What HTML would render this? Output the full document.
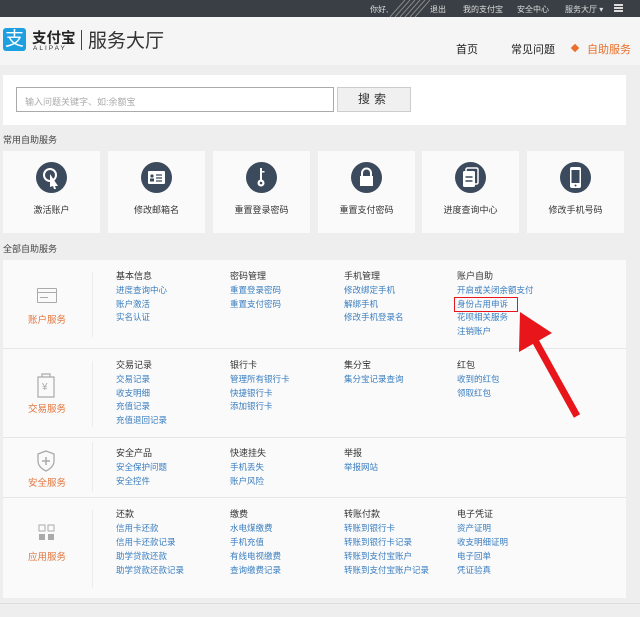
<!DOCTYPE html>
<html><head><meta charset="utf-8"><style>
*{margin:0;padding:0;box-sizing:border-box}
body{width:640px;height:617px;overflow:hidden;background:#eeeeee;font-family:"Liberation Sans","Noto Sans CJK SC",sans-serif;position:relative;font-size:9px}
.abs{position:absolute;white-space:nowrap}
.top{position:absolute;left:0;top:0;width:640px;height:17px;background:#393f45;color:#ddd;font-size:8px}
.top span{position:absolute;top:4px}
.hdr{position:absolute;left:0;top:17px;width:640px;height:48px;background:#f5f5f5}
.panel{position:absolute;background:#fafafa}
.card{position:absolute;top:151px;width:97px;height:82px;background:#fafafa}
.card svg{position:absolute;left:33px;top:11px}
.card div{position:absolute;top:52px;width:100%;text-align:center;font-size:9px;color:#333}
.h{color:#333;font-size:9px}
.l{color:#3a7ec0;font-size:8.5px}
.sec{color:#e0773f;font-size:9.5px}
.sep{position:absolute;left:92px;width:1px;background:#ececec}
.rowline{position:absolute;left:3px;width:623px;height:1px;background:#e6e6e6}
</style></head><body>
<div class="top">
<span style="left:370px">你好,</span>
<svg class="abs" style="left:380px;top:0" width="60" height="17"><g stroke="#888" stroke-width="1"><path d="M10 17L25 0M15 17L30 0M20 17L35 0M25 17L40 0M30 17L45 0M35 17L50 0"/></g></svg>
<span style="left:430px">退出</span>
<span style="left:463px">我的支付宝</span>
<span style="left:517px">安全中心</span>
<span style="left:565px">服务大厅 ▾</span>
<span style="left:614px;top:4px;width:9px;height:8px;border-top:2px solid #ddd;border-bottom:2px solid #ddd"></span>
<span style="left:614px;top:7px;width:9px;height:2px;background:#ddd"></span>
</div>
<div class="hdr">
<div class="abs" style="left:3px;top:11px;width:23px;height:23px;background:#1e9fe0;border-radius:3px;color:#fff;font-size:19px;line-height:23px;text-align:center">支</div>
<div class="abs" style="left:32px;top:10px;font-size:14.5px;font-weight:bold;color:#222">支付宝</div>
<div class="abs" style="left:33px;top:28px;font-size:6.5px;letter-spacing:2px;color:#333">ALIPAY</div>
<div class="abs" style="left:81px;top:13px;width:1px;height:20px;background:#444"></div>
<div class="abs" style="left:88px;top:9px;font-size:19px;color:#333">服务大厅</div>
<div class="abs" style="left:456px;top:24px;font-size:11px;color:#222">首页</div>
<div class="abs" style="left:511px;top:24px;font-size:11px;color:#222">常见问题</div>
<div class="abs" style="left:572px;top:28px;width:6px;height:6px;background:#e8702a;transform:rotate(45deg)"></div>
<div class="abs" style="left:587px;top:24px;font-size:11px;color:#e8702a">自助服务</div>
</div>
<div class="panel" style="left:3px;top:75px;width:623px;height:50px;background:#fff"></div>
<div class="abs" style="left:16px;top:87px;width:318px;height:25px;border:1px solid #aaa;background:#fff;color:#aaa;font-size:9px;padding:7px 0 0 8px">输入问题关键字、如:余额宝</div>
<div class="abs" style="left:337px;top:87px;width:74px;height:25px;border:1px solid #ccc;background:#f0f0f0;color:#333;font-size:12px;text-align:center;line-height:23px;letter-spacing:4px">搜索</div>
<div class="abs" style="left:3px;top:133px;color:#444">常用自助服务</div>
<div class="card" style="left:3px"><svg width="31" height="31"><circle cx="15.5" cy="15.5" r="15.5" fill="#3b4a5c"/><circle cx="14" cy="13" r="6" fill="none" stroke="#fff" stroke-width="2"/><path d="M14 12L22 24L19 24L20 27L18 27L17 24L14 25Z" fill="#fff"/></svg><div>激活账户</div></div>
<div class="card" style="left:108px"><svg width="31" height="31"><circle cx="15.5" cy="15.5" r="15.5" fill="#3b4a5c"/><rect x="7" y="9" width="17" height="13" rx="1" fill="#fff"/><circle cx="11" cy="14" r="1.6" fill="#3b4a5c"/><rect x="9" y="16.5" width="4" height="3" fill="#3b4a5c"/><path d="M15 13h6M15 16h6M15 19h6" stroke="#3b4a5c" stroke-width="1.2"/></svg><div>修改邮箱名</div></div>
<div class="card" style="left:213px"><svg width="31" height="31"><circle cx="15.5" cy="15.5" r="15.5" fill="#3b4a5c"/><circle cx="15" cy="21" r="3.5" fill="#fff"/><rect x="14" y="6" width="2" height="13" fill="#fff"/><rect x="16" y="9" width="2.5" height="1.5" fill="#fff"/><circle cx="15" cy="21" r="1.3" fill="#3b4a5c"/></svg><div>重置登录密码</div></div>
<div class="card" style="left:318px"><svg width="31" height="31"><circle cx="15.5" cy="15.5" r="15.5" fill="#3b4a5c"/><path d="M11 14v-3a4.5 4.5 0 0 1 9 0v3" fill="none" stroke="#fff" stroke-width="2"/><rect x="9" y="14" width="13" height="10" fill="#fff"/></svg><div>重置支付密码</div></div>
<div class="card" style="left:422px"><svg width="31" height="31"><circle cx="15.5" cy="15.5" r="15.5" fill="#3b4a5c"/><rect x="11" y="6" width="12" height="16" rx="1.5" fill="none" stroke="#fff" stroke-width="1.5"/><rect x="8" y="9" width="12" height="16" rx="1.5" fill="#fff"/><path d="M10.5 15h7M10.5 19h7" stroke="#3b4a5c" stroke-width="1.5"/></svg><div>进度查询中心</div></div>
<div class="card" style="left:527px"><svg width="31" height="31"><circle cx="15.5" cy="15.5" r="15.5" fill="#3b4a5c"/><rect x="10" y="5" width="11" height="21" rx="2" fill="#fff"/><rect x="11.5" y="8" width="8" height="13" fill="#3b4a5c"/><circle cx="15.5" cy="23.5" r="1" fill="#3b4a5c"/></svg><div>修改手机号码</div></div>
<div class="abs" style="left:3px;top:242px;color:#444">全部自助服务</div>
<div class="panel" style="left:3px;top:260px;width:623px;height:338px"></div>
<div class="rowline" style="top:348px"></div>
<div class="rowline" style="top:437px"></div>
<div class="rowline" style="top:497px"></div>
<div class="sep" style="top:272px;height:65px"></div>
<div class="sep" style="top:361px;height:66px"></div>
<div class="sep" style="top:442px;height:50px"></div>
<div class="sep" style="top:510px;height:78px"></div>
<div class="abs" style="left:37px;top:288px;width:20px;height:15px;border:1.2px solid #aaa;border-radius:1px"></div>
<div class="abs" style="left:37px;top:292px;width:20px;height:1px;background:#aaa"></div>
<div class="abs" style="left:40px;top:297px;width:8px;height:1px;background:#aaa"></div>
<div class="abs sec" style="left:28px;top:312px">账户服务</div>
<svg class="abs" style="left:36px;top:372px" width="20" height="26"><path d="M2 5h16v20H2z M6 5V2h8v3" fill="none" stroke="#aaa" stroke-width="1.2"/><text x="6" y="18" font-size="10" fill="#aaa">¥</text></svg>
<div class="abs sec" style="left:28px;top:401px">交易服务</div>
<svg class="abs" style="left:37px;top:450px" width="18" height="22"><path d="M9 1L17 4V11C17 16 13 19 9 21C5 19 1 16 1 11V4Z" fill="none" stroke="#aaa" stroke-width="1.3"/><path d="M9 7v8M5 11h8" stroke="#aaa" stroke-width="1.5"/></svg>
<div class="abs sec" style="left:28px;top:475px">安全服务</div>
<svg class="abs" style="left:38px;top:524px" width="18" height="18"><rect x="1" y="1" width="6" height="6" fill="none" stroke="#aaa"/><rect x="10" y="1" width="6" height="6" fill="none" stroke="#aaa"/><rect x="1" y="10" width="6" height="6" fill="#aaa"/><rect x="10" y="10" width="6" height="6" fill="#aaa"/></svg>
<div class="abs sec" style="left:28px;top:549px">应用服务</div>

<div class="abs" style="left:116px;top:270px;line-height:13.8px"><div class="h">基本信息</div><div class="l">进度查询中心</div><div class="l">账户激活</div><div class="l">实名认证</div></div>
<div class="abs" style="left:230px;top:270px;line-height:13.8px"><div class="h">密码管理</div><div class="l">重置登录密码</div><div class="l">重置支付密码</div></div>
<div class="abs" style="left:344px;top:270px;line-height:13.8px"><div class="h">手机管理</div><div class="l">修改绑定手机</div><div class="l">解绑手机</div><div class="l">修改手机登录名</div></div>
<div class="abs" style="left:457px;top:270px;line-height:13.8px"><div class="h">账户自助</div><div class="l">开启或关闭余额支付</div><div class="l">身份占用申诉</div><div class="l">花呗相关服务</div><div class="l">注销账户</div></div>

<div class="abs" style="left:116px;top:359px;line-height:13.8px"><div class="h">交易记录</div><div class="l">交易记录</div><div class="l">收支明细</div><div class="l">充值记录</div><div class="l">充值退回记录</div></div>
<div class="abs" style="left:230px;top:359px;line-height:13.8px"><div class="h">银行卡</div><div class="l">管理所有银行卡</div><div class="l">快捷银行卡</div><div class="l">添加银行卡</div></div>
<div class="abs" style="left:344px;top:359px;line-height:13.8px"><div class="h">集分宝</div><div class="l">集分宝记录查询</div></div>
<div class="abs" style="left:457px;top:359px;line-height:13.8px"><div class="h">红包</div><div class="l">收到的红包</div><div class="l">领取红包</div></div>

<div class="abs" style="left:116px;top:446px;line-height:14px"><div class="h">安全产品</div><div class="l">安全保护问题</div><div class="l">安全控件</div></div>
<div class="abs" style="left:230px;top:446px;line-height:14px"><div class="h">快速挂失</div><div class="l">手机丢失</div><div class="l">账户风险</div></div>
<div class="abs" style="left:344px;top:446px;line-height:14px"><div class="h">举报</div><div class="l">举报网站</div></div>

<div class="abs" style="left:116px;top:507px;line-height:14px"><div class="h">还款</div><div class="l">信用卡还款</div><div class="l">信用卡还款记录</div><div class="l">助学贷款还款</div><div class="l">助学贷款还款记录</div></div>
<div class="abs" style="left:230px;top:507px;line-height:14px"><div class="h">缴费</div><div class="l">水电煤缴费</div><div class="l">手机充值</div><div class="l">有线电视缴费</div><div class="l">查询缴费记录</div></div>
<div class="abs" style="left:344px;top:507px;line-height:14px"><div class="h">转账付款</div><div class="l">转账到银行卡</div><div class="l">转账到银行卡记录</div><div class="l">转账到支付宝账户</div><div class="l">转账到支付宝账户记录</div></div>
<div class="abs" style="left:457px;top:507px;line-height:14px"><div class="h">电子凭证</div><div class="l">资产证明</div><div class="l">收支明细证明</div><div class="l">电子回单</div><div class="l">凭证验真</div></div>

<div class="abs" style="left:0;top:603px;width:640px;height:1px;background:#ddd"></div>
<div class="abs" style="left:454px;top:297px;width:64px;height:15px;border:1.5px solid #e8151b"></div>
<svg class="abs" style="left:0;top:0" width="640" height="617"><path d="M520 312L519 352L552 333Z" fill="#e8151b"/><path d="M532 335L577 416" stroke="#e8151b" stroke-width="7"/></svg>
</body></html>
